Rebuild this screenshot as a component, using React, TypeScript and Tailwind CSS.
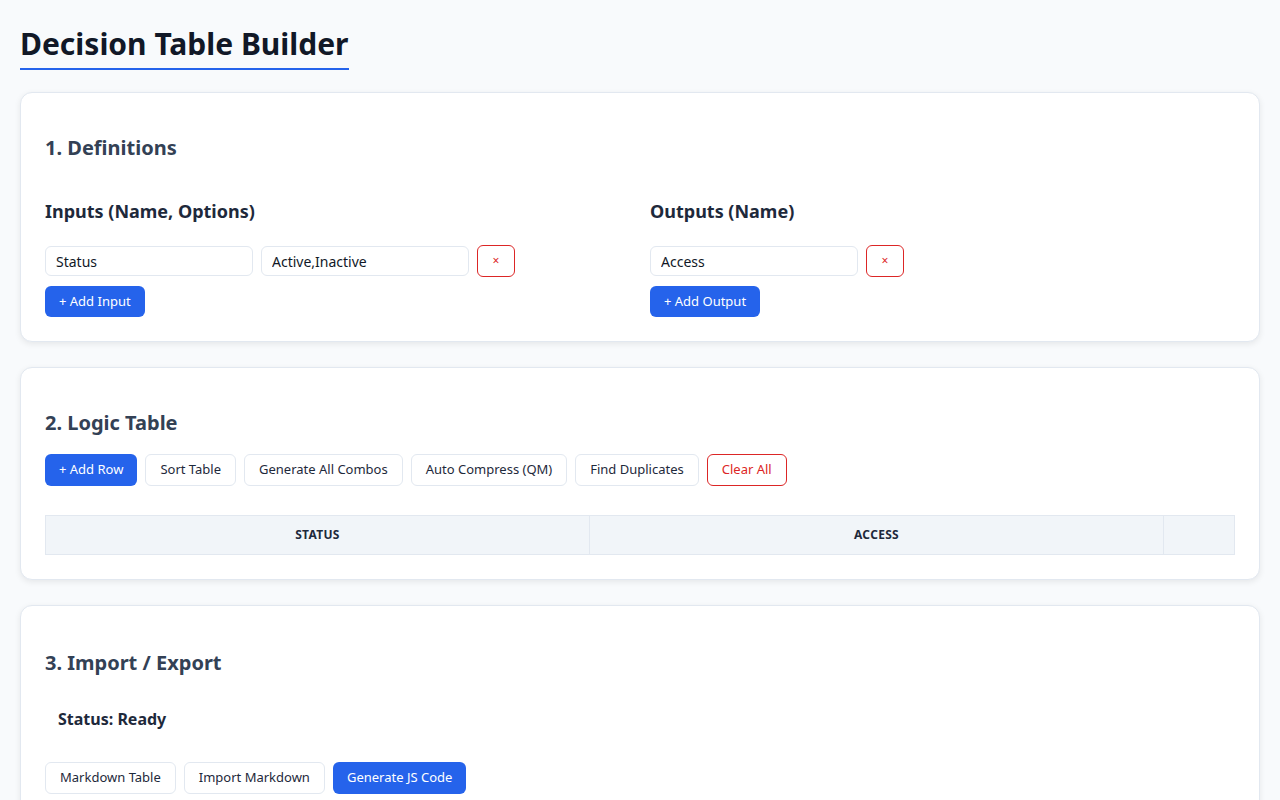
export default function App() {
  const btnW = "h-8 px-[14px] rounded-md border border-[#e2e8f0] bg-white text-[13px] text-[#1e293b]";
  const btnB = "h-8 px-[14px] rounded-md bg-[#2563eb] text-white text-[13px]";
  const card = "bg-white border border-[#e2e8f0] rounded-xl shadow-[0_2px_6px_rgba(0,0,0,0.08)] px-6";
  const h2 = "text-[20px] leading-6 font-bold text-[#334155]";
  const inp = "h-[30px] w-[208px] rounded-md border border-[#e2e8f0] px-[10px] text-[14px] text-[#111827] bg-white outline-none";
  const xBtn = "h-8 w-[38px] rounded-md border border-[#dc2626] text-[#dc2626] bg-white text-[12px] flex items-center justify-center";
  return (
    <div className="min-h-screen bg-[#f8fafc] p-5 font-['Liberation_Sans',Arial,sans-serif] text-[#0f172a]">
      <div className="inline-block border-b-2 border-[#2563eb] pb-[7px] pt-[7px]">
        <h1 className="text-[30px] leading-[34px] font-bold text-[#111827]">Decision Table Builder</h1>
      </div>
      <div className={card + " mt-[22px] pt-[43px] pb-[24px]"}>
        <h2 className={h2}>1. Definitions</h2>
        <div className="grid grid-cols-2 gap-5 mt-[40px]">
          <div>
            <h3 className="text-[18px] leading-[22px] font-bold text-[#1e293b]">Inputs (Name, Options)</h3>
            <div className="flex items-center gap-2 mt-[23px]">
              <input className={inp} defaultValue="Status" />
              <input className={inp} defaultValue="Active,Inactive" />
              <button className={xBtn}>×</button>
            </div>
            <button className={btnB + " mt-[9px] h-[31px]"}>+ Add Input</button>
          </div>
          <div>
            <h3 className="text-[18px] leading-[22px] font-bold text-[#1e293b]">Outputs (Name)</h3>
            <div className="flex items-center gap-2 mt-[23px]">
              <input className={inp} defaultValue="Access" />
              <button className={xBtn}>×</button>
            </div>
            <button className={btnB + " mt-[9px] h-[31px]"}>+ Add Output</button>
          </div>
        </div>
      </div>
      <div className={card + " mt-[25px] pt-[43px] pb-[24px]"}>
        <h2 className={h2}>2. Logic Table</h2>
        <div className="flex gap-2 mt-[19px]">
          <button className={btnB}>+ Add Row</button>
          <button className={btnW}>Sort Table</button>
          <button className={btnW}>Generate All Combos</button>
          <button className={btnW}>Auto Compress (QM)</button>
          <button className={btnW}>Find Duplicates</button>
          <button className={btnW.replace("border-[#e2e8f0]", "border-[#dc2626]").replace("text-[#1e293b]", "text-[#dc2626]")}>Clear All</button>
        </div>
        <div className="mt-[29px] flex h-10 border border-[#e2e8f0] bg-[#f1f5f9] text-[12px] font-bold text-[#1e293b] tracking-wide">
          <div className="w-[544px] flex items-center justify-center border-r border-[#e2e8f0]">STATUS</div>
          <div className="w-[574px] flex items-center justify-center border-r border-[#e2e8f0]">ACCESS</div>
          <div className="flex-1"></div>
        </div>
      </div>
      <div className={card + " mt-[25px] pt-[45px] pb-[24px]"}>
        <h2 className={h2}>3. Import / Export</h2>
        <div className="px-[13px] pt-[34px] pb-[33px] text-[16px] leading-[20px] font-bold text-[#1e293b]">Status: Ready</div>
        <div className="flex gap-2">
          <button className={btnW}>Markdown Table</button>
          <button className={btnW}>Import Markdown</button>
          <button className={btnB}>Generate JS Code</button>
        </div>
      </div>
    </div>
  );
}
